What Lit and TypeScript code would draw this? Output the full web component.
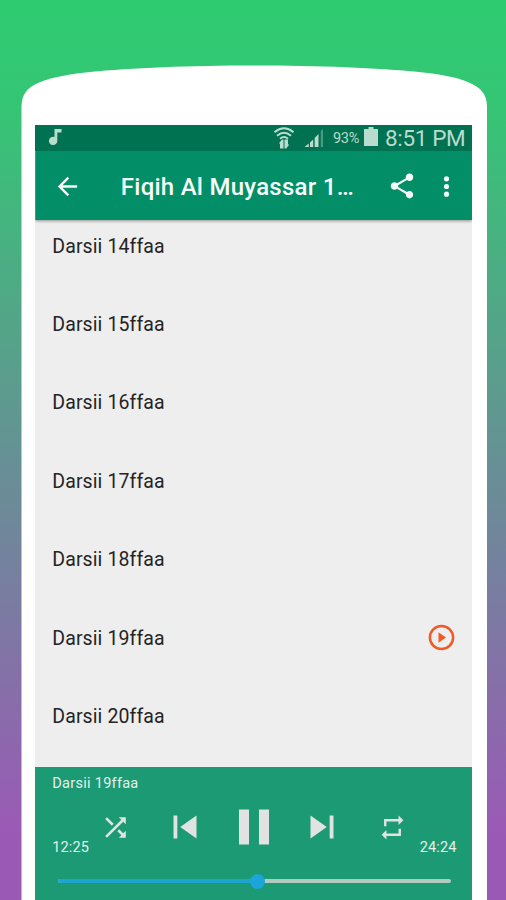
import { LitElement, html, css, svg } from "lit";
import { customElement } from "lit/decorators.js";

const tracks = [14, 15, 16, 17, 18, 19, 20].map((n) => `Darsii ${n}ffaa`);
const current = "Darsii 19ffaa";

const icon = (cls: string, box: string, body: unknown) =>
  html`<svg class="icon ${cls}" viewBox=${box} fill="currentColor">${body}</svg>`;

@customElement("status-bar")
class StatusBar extends LitElement {
  static styles = css`
    :host { display: flex; height: 26px; background: #007151; color: #b9dccf; align-items: center; box-sizing: border-box; padding: 0 6px 0 14px; }
    svg { display: block; flex: none; }
    .note { width: 14px; height: 18px; margin-top: -3px; }
    .wifi { width: 22px; height: 23px; margin-left: auto; }
    .signal { width: 20px; height: 20px; margin-left: 9px; }
    .pct { font-size: 14.5px; letter-spacing: -0.3px; margin-left: 9px; width: 28px; white-space: nowrap; }
    .battery { width: 14px; height: 20px; margin-left: 3px; margin-top: -2px; }
    .time { font-size: 22.5px; line-height: 26px; margin-left: 7px; width: 81px; white-space: nowrap; letter-spacing: -0.35px; }
  `;
  render() {
    return html`
      ${icon("note", "0 0 14 18", svg`<path d="M5.500 1H12.500V4.600H8.300V12.500A4.200 4.200 0 1 1 5.500 8.900Z"/>`)}
      ${icon("wifi", "0 0 22 23", svg`
        <g fill="none" stroke="currentColor" stroke-width="1.9"><path d="M1.500 5.200Q11-2.600 20.500 5.200M4 8.700Q11 2.800 18 8.700M7 11.800Q11 8.400 15 11.800"/></g>
        <path d="M5.800 16.500L9 12.500H10.500V21.500H7V16.500ZM11.500 12.500H15V17.500H16.300L13.200 21.500H11.500Z"/>`)}
      ${icon("signal", "0 0 20 20", svg`<path d="M.5 19L4.800 15.500V19ZM6 14.500L9.200 11.500V19H6ZM10.700 10L14.500 6V19H10.700Z"/><path opacity=".4" d="M16.800 3L19 1V19H16.800Z"/>`)}
      <span class="pct">93%</span>
      ${icon("battery", "0 0 14 20", svg`<path d="M4.500 0H9.500V2H14V19H0V2H4.500Z"/>`)}
      <span class="time">8:51 PM</span>`;
  }
}

@customElement("top-bar")
class TopBar extends LitElement {
  static styles = css`
    :host { display: flex; height: 69px; background: #028f68; color: #f7fbfa; align-items: center; box-shadow: 0 1px 3px rgba(0,0,0,.4); clip-path: inset(0 0 -5px 0); position: relative; }
    svg { display: block; flex: none; }
    .back { width: 29px; height: 29px; margin-left: 17.5px; margin-top: 1px; }
    .title { font-size: 24px; letter-spacing: .26px; font-weight: 500; margin-left: 39px; margin-top: 3px; width: 240px; white-space: nowrap; }
    .share { width: 30px; height: 30px; margin-left: 26.500px; margin-top: 1px; }
    .more { width: 27px; height: 27px; margin-left: 16px; margin-top: 1px; }
  `;
  render() {
    return html`
      ${icon("back", "0 0 24 24", svg`<path d="M20 11H7.83l5.59-5.59L12 4l-8 8 8 8 1.41-1.41L7.83 13H20v-2z"/>`)}
      <span class="title">Fiqih Al Muyassar 1…</span>
      ${icon("share", "0 0 24 24", svg`<path d="M18 16.08c-.76 0-1.44.3-1.96.77L8.91 12.7c.05-.23.09-.46.09-.7s-.04-.47-.09-.7l7.05-4.11c.54.5 1.25.81 2.04.81 1.66 0 3-1.34 3-3s-1.34-3-3-3-3 1.34-3 3c0 .24.04.47.09.7L8.04 9.81C7.5 9.31 6.79 9 6 9c-1.66 0-3 1.34-3 3s1.34 3 3 3c.79 0 1.5-.31 2.04-.81l7.12 4.16c-.05.21-.08.43-.08.65 0 1.61 1.31 2.92 2.92 2.92s2.92-1.31 2.92-2.92-1.31-2.92-2.92-2.92z"/>`)}
      ${icon("more", "0 0 24 24", svg`<circle cx="12" cy="5.200" r="2.300"/><circle cx="12" cy="12" r="2.300"/><circle cx="12" cy="18.800" r="2.300"/>`)}`;
  }
}

@customElement("player-panel")
class PlayerPanel extends LitElement {
  static styles = css`
    :host { display: grid; grid-template-rows: 30px 60px 1fr; height: 133px; background: #1b9a74; color: #e4f1ec; font-size: 14.5px; }
    svg { display: block; flex: none; }
    .name { padding-left: 17px; line-height: 34px; letter-spacing: .28px; }
    .controls { display: flex; align-items: center; color: #e1e3e2; }
    .time { align-self: flex-end; line-height: 18px; position: relative; top: 0; width: 38px; white-space: nowrap; color: #e4f1ec; letter-spacing: .1px; }
    .left { margin-left: 17px; }
    .shuffle { width: 31px; height: 31px; margin-left: 10px; }
    .prev, .next { width: 46px; height: 46px; }
    .prev { margin-left: 31px; }
    .pause { width: 60px; height: 60px; margin-left: 16px; }
    .next { margin-left: 15px; }
    .repeat { width: 29px; height: 29px; margin-left: 32.500px; }
    .right { margin-left: 13px; }
    .seek { height: 4px; margin: 22px 21px 0 23px; border-radius: 2px; background: #b3cac1; display: flex; align-items: center; }
    .played { height: 4px; background: #1ba5cf; border-radius: 2px; display: flex; align-items: center; justify-content: flex-end; }
    .thumb { width: 15px; height: 15px; border-radius: 50%; background: #1ba5d8; flex: none; margin-right: -7px; }
  `;
  render() {
    const progress = { now: 12 * 60 + 25, total: 24 * 60 + 24 };
    return html`
      <div class="name">${current}</div>
      <div class="controls">
        <span class="time left">12:25</span>
        ${icon("shuffle", "0 0 24 24", svg`<path d="M10.59 9.17L5.41 4 4 5.41l5.17 5.17 1.42-1.41zM14.5 4l2.04 2.04L4 18.59 5.41 20 17.96 7.46 20 9.5V4h-5.5zm.33 9.41l-1.41 1.41 3.13 3.13L14.5 20H20v-5.5l-2.04 2.04-3.13-3.13z"/>`)}
        ${icon("prev", "0 0 24 24", svg`<path d="M6 6h2v12H6zM9.5 12l8.5 6V6z"/>`)}
        ${icon("pause", "0 0 24 24", svg`<path d="M6 19h4V5H6v14zm8-14v14h4V5h-4z"/>`)}
        ${icon("next", "0 0 24 24", svg`<path d="M6 18l8.5-6L6 6v12zM16 6v12h2V6h-2z"/>`)}
        ${icon("repeat", "0 0 24 24", svg`<path d="M7 7h10v3l4-4-4-4v3H5v6h2V7zm10 10H7v-3l-4 4 4 4v-3h12v-6h-2v4z"/>`)}
        <span class="time right">24:24</span>
      </div>
      <div class="seek"><div class="played" style="width:${(progress.now / progress.total) * 100}%"><span class="thumb"></span></div></div>`;
  }
}

@customElement("app-root")
class AppRoot extends LitElement {
  static styles = css`
    :host { display: grid; width: 506px; height: 900px; overflow: hidden; font-family: Roboto, "Noto Sans", sans-serif; background: linear-gradient(180deg, #2ecc71 0%, #35c575 12%, #9b59b6 93%, #9b59b6 100%); }
    .shape, .screen { grid-area: 1 / 1; }
    .shape { width: 506px; height: 900px; display: block; }
    .screen { margin: 125px 34px 0 35.300px; height: 775px; display: grid; grid-template-rows: 26px 69px 547px 133px; background: #eee; }
    .list { display: flex; flex-direction: column; padding-top: 0; margin-top: -13px; overflow: hidden; }
    .row { flex: none; height: 78.400px; display: flex; align-items: center; justify-content: space-between; padding: 0 17px; font-size: 19.500px; letter-spacing: .1px; color: #242424; }
    .play { width: 27px; height: 27px; color: #f05a28; display: block; margin-top: -1px; }
  `;
  render() {
    return html`
      <svg class="shape" viewBox="0 0 506 900"><path fill="#fff" d="M21.500 900V106C22 94 27 88 38 83C55 76 72 74 90 72C130 68 190 65.500 254 65.500C318 65.500 379 68 419 72C437 74 454 76 470 83C481 88 486.500 94 487 106V900Z"/></svg>
      <main class="screen">
        <status-bar></status-bar>
        <top-bar></top-bar>
        <div class="list">
          ${tracks.map((t) => html`<div class="row"><span>${t}</span>${t === current
            ? icon("play", "0 0 27 27", svg`<circle cx="13.500" cy="13.500" r="11.600" fill="none" stroke="currentColor" stroke-width="2.500"/><path d="M10.500 8.300V18.700L18 13.500Z"/>`)
            : ""}</div>`)}
        </div>
        <player-panel></player-panel>
      </main>`;
  }
}
